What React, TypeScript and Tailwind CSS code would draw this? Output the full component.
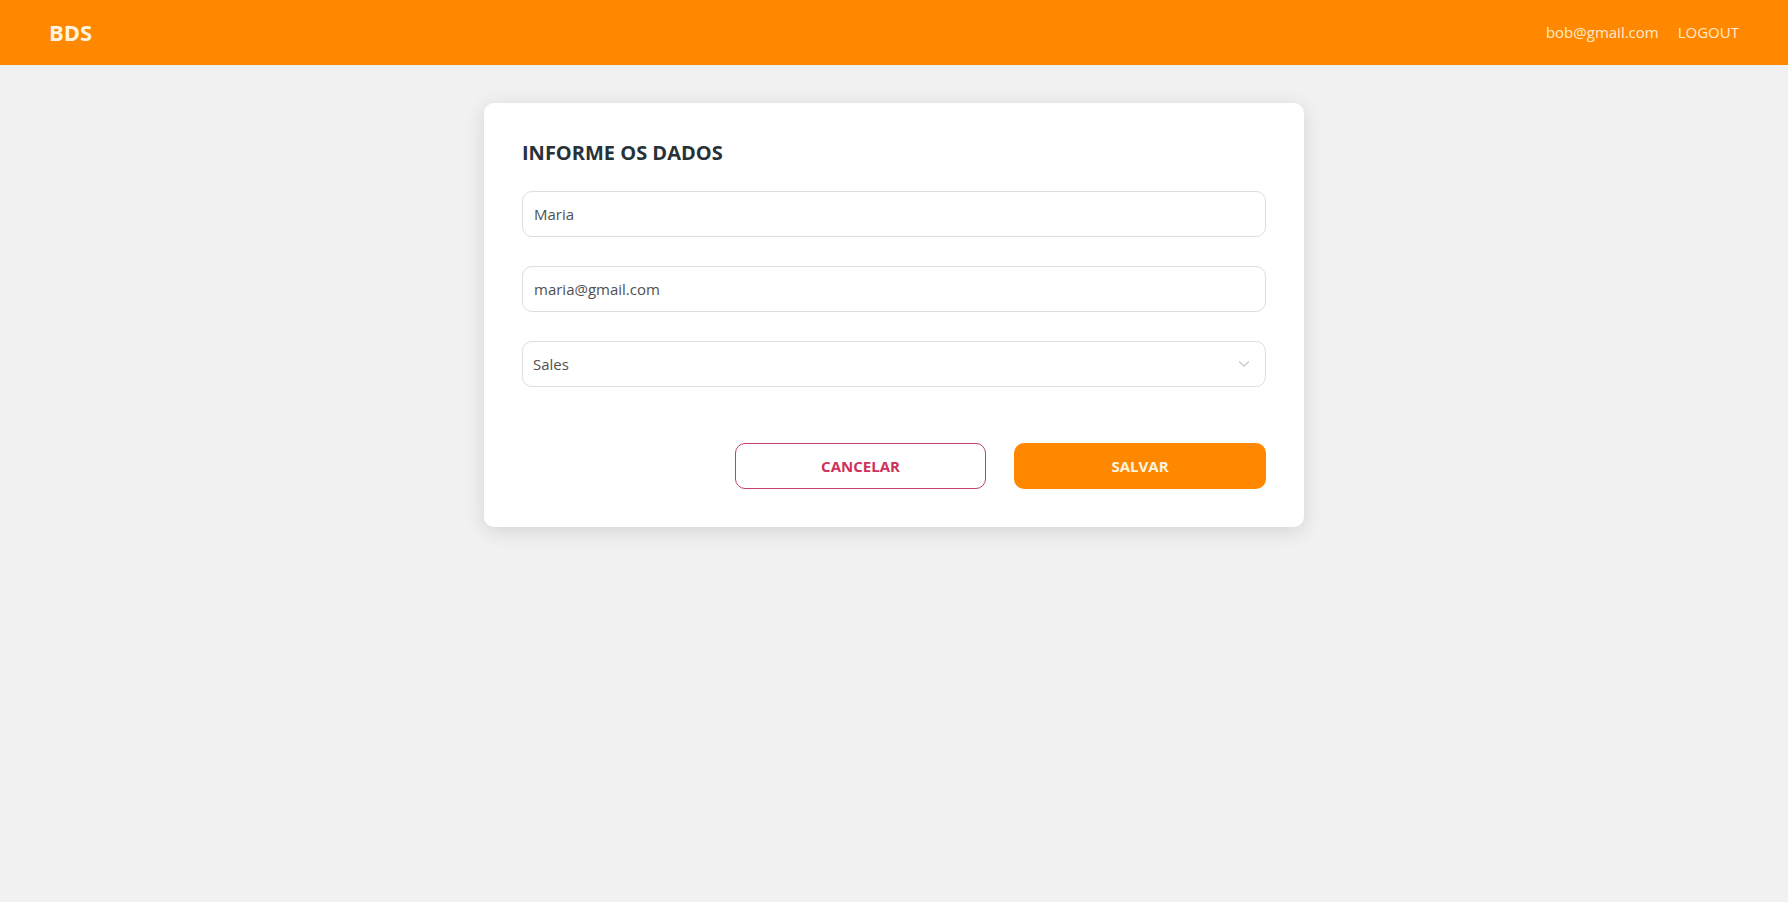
import { ChevronDown } from "lucide-react";

const font = { fontFamily: '"Open Sans", "Noto Sans", sans-serif' };

export default function App() {
  return (
    <div className="min-h-screen bg-[#f1f1f1]" style={font}>
      {/* Navbar */}
      <nav className="h-[65px] bg-[#ff8800] flex items-center justify-between pl-[49px] pr-[49px]">
        <span className="text-[22px] font-bold text-[#fff4e0]">BDS</span>
        <div className="flex items-center gap-[19px] text-[15px] text-[#ffebcc]">
          <span>bob@gmail.com</span>
          <span>LOGOUT</span>
        </div>
      </nav>

      {/* Form card */}
      <main className="flex justify-center pt-[38px]">
        <div className="w-[820px] bg-white rounded-[10px] shadow-[0_4px_20px_rgba(0,0,0,0.12)] px-[38px] pt-[35px] pb-[38px]">
          <h1 className="text-[20px] leading-[30px] font-bold text-[#263238] mb-[23px]">
            INFORME OS DADOS
          </h1>
          <div className="flex flex-col gap-[29px]">
            <div className="h-[46px] border border-[#dedede] rounded-[10px] px-[11px] flex items-center text-[15px] text-[#505050]">
              Maria
            </div>
            <div className="h-[46px] border border-[#dedede] rounded-[10px] px-[11px] flex items-center text-[15px] text-[#505050]">
              maria@gmail.com
            </div>
            <div className="h-[46px] border border-[#dedede] rounded-[10px] pl-[10px] pr-[12px] flex items-center justify-between text-[15px] text-[#505050]">
              <span>Sales</span>
              <ChevronDown size={18} strokeWidth={1.5} className="text-[#c8c8c8]" />
            </div>
          </div>
          <div className="flex justify-end gap-[28px] mt-[56px]">
            <button className="w-[251px] h-[46px] border border-[#c2406a] rounded-[10px] text-[15px] font-bold text-[#d0305c] bg-white">
              CANCELAR
            </button>
            <button className="w-[252px] h-[46px] rounded-[10px] text-[15px] font-bold text-[#fff4e0] bg-[#ff8800]">
              SALVAR
            </button>
          </div>
        </div>
      </main>
    </div>
  );
}
